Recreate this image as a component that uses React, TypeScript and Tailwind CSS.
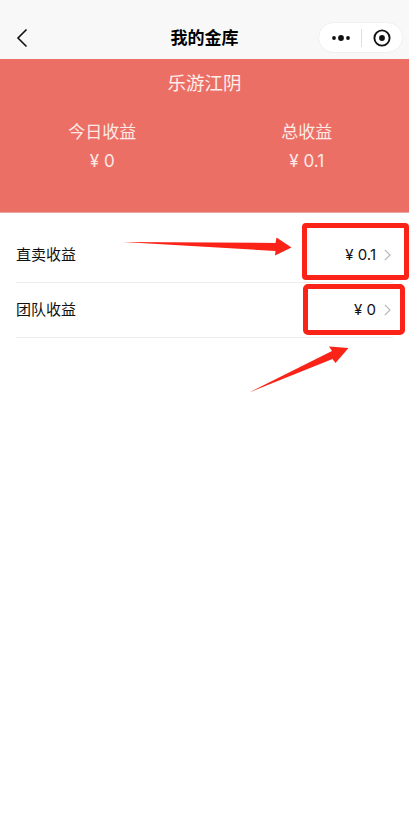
const FONT = "font-['Inter','Noto_Sans_CJK_SC',sans-serif]";

function Row({ label, value, last }: { label: string; value: string; last?: boolean }) {
  return (
    <div className={`mx-4 flex items-center justify-between border-b border-[#ececec] ${last ? "h-[55px]" : "h-[70px] pt-[14px]"}`}>
      <span className="text-[15px] leading-[20px] text-[#111]">{label}</span>
      <div className="flex items-center">
        <span className="text-[15px] leading-[20px] text-[#111]">{value}</span>
        <svg width="7" height="12" viewBox="0 0 7 12" fill="none" className="ml-[8px] mr-[2px]">
          <path d="M.8.8L6 6 .8 11.2" stroke="#b4b4b4" strokeWidth="1.1" />
        </svg>
      </div>
    </div>
  );
}

function Stat({ label, value }: { label: string; value: string }) {
  return (
    <div className="flex flex-col items-center">
      <span className="text-[17px] leading-[24px] text-[#fde9e6]">{label}</span>
      <span className="mt-[6px] text-[17px] leading-[22px] text-[#fde9e6]">{"¥ " + value}</span>
    </div>
  );
}

export default function App() {
  return (
    <div className={`relative h-[837px] w-[409px] overflow-hidden bg-white ${FONT}`}>
      <header className="relative flex h-[59px] items-end justify-center bg-[#f8f8f8] pb-[9px]">
        <svg width="12" height="20" viewBox="0 0 12 20" fill="none" className="absolute left-[16px] top-[28px]">
          <path d="M10.5 1.5L2 10l8.5 8.5" stroke="#111" strokeWidth="1.6" />
        </svg>
        <span className="text-[17px] font-semibold leading-[24px] text-black">我的金库</span>
        <div className="absolute left-[318px] top-[22px] flex h-[31px] w-[85px] items-center rounded-full border border-[#f0f0f0] bg-white">
          <svg width="20" height="8" viewBox="0 0 20 8" className="ml-[12px]">
            <circle cx="3" cy="4" r="1.9" fill="#111" />
            <circle cx="10" cy="4" r="2.9" fill="#111" />
            <circle cx="17" cy="4" r="1.9" fill="#111" />
          </svg>
          <div className="ml-[10px] h-[18px] w-px bg-[#dedede]" />
          <svg width="18" height="18" viewBox="0 0 18 18" fill="none" className="ml-[11px]">
            <circle cx="9" cy="9" r="7.6" stroke="#111" strokeWidth="1.9" />
            <circle cx="9" cy="9" r="2.9" fill="#111" />
          </svg>
        </div>
      </header>

      <section className="h-[154px] border-b border-[#e5a8a2] bg-[#ec6f66] pt-[11px]">
        <div className="text-center text-[18.5px] leading-[26px] text-[#fdeeec]">乐游江阴</div>
        <div className="mt-[24px] grid grid-cols-2">
          <Stat label="今日收益" value="0" />
          <Stat label="总收益" value="0.1" />
        </div>
      </section>

      <Row label="直卖收益" value="¥ 0.1" />
      <Row label="团队收益" value="¥ 0" last />

      {/* red annotations drawn over the page */}
      <div className="absolute left-[302px] top-[223px] h-[57px] w-[107px] rounded-[4px] border-[5px] border-[#fb2217]" />
      <div className="absolute left-[303px] top-[284px] h-[51px] w-[102px] rounded-[5px] border-[5px] border-[#fb2217]" />
      <svg width="409" height="837" viewBox="0 0 409 837" className="absolute left-0 top-0">
        <polygon points="123,242 275.5,243 276.5,237.5 291.5,247.5 275,255.5 275.5,251" fill="#fb2217" />
        <polygon points="249,392.5 332,351 329,346.5 348.5,348 335.5,363 332.5,359" fill="#fb2217" />
      </svg>
    </div>
  );
}
